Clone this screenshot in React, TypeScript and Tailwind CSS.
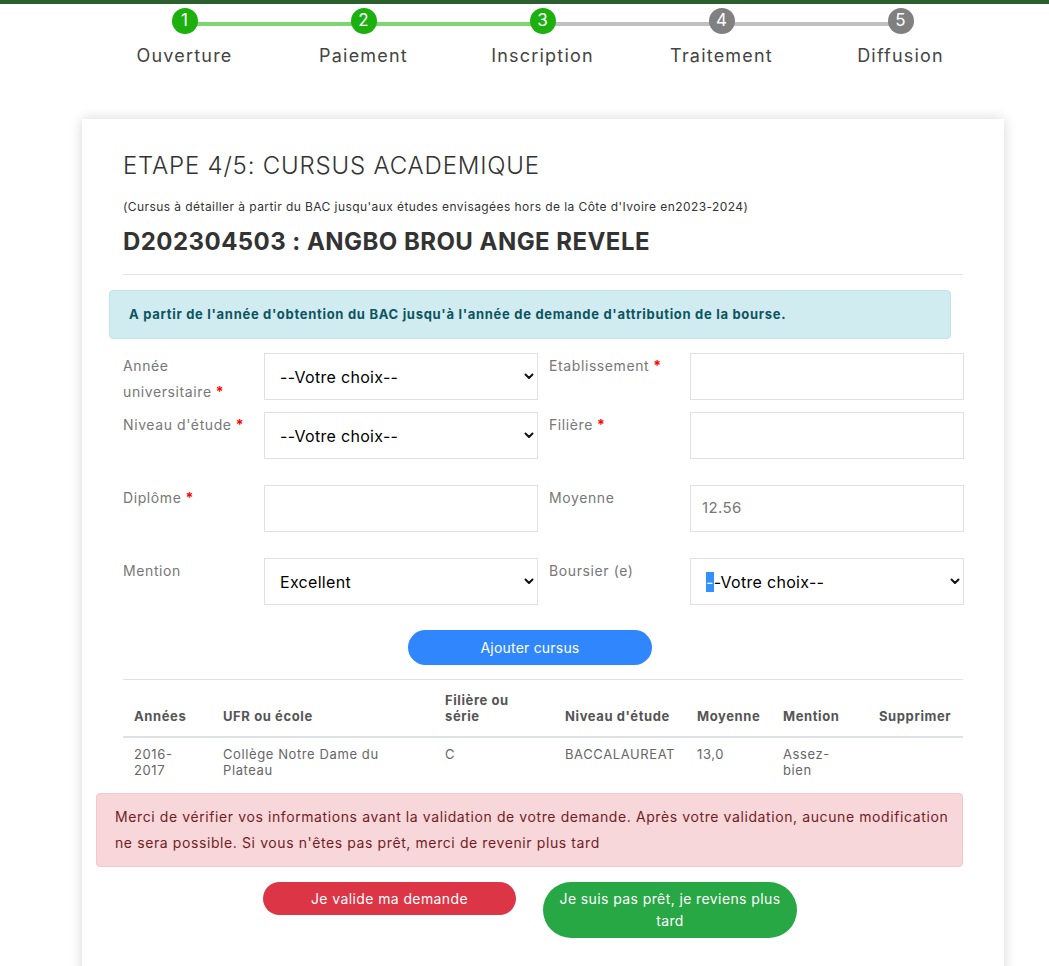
import React from "react";

const FONT = { fontFamily: "Inter, 'Open Sans', 'Liberation Sans', sans-serif" };

function Chevron() {
  return (
    <svg width="10" height="7" viewBox="0 0 10 7" className="shrink-0">
      <path d="M1.5 1.5 L5 5 L8.5 1.5" fill="none" stroke="#111" strokeWidth="2" strokeLinecap="round" strokeLinejoin="round" />
    </svg>
  );
}

function FakeSelect({ value, highlight }: { value: string; highlight?: boolean }) {
  return (
    <div className="flex h-[47px] items-center justify-between border border-[#e0e0e0] bg-white pl-[15px] pr-[3px] text-[16px] tracking-[0.3px] text-black">
      <span>
        {highlight ? (
          <>
            <span className="bg-[#3390ff] text-white">-</span>-Votre choix--
          </>
        ) : (
          value
        )}
      </span>
      <Chevron />
    </div>
  );
}

function FakeInput({ value }: { value?: string }) {
  return (
    <div className="flex h-[47px] items-center border border-[#e0e0e0] bg-white pl-[11px] text-[15px] tracking-[0.4px] text-[#777]">
      {value}
    </div>
  );
}

function Label({ children, req, right }: { children: React.ReactNode; req?: boolean; right?: boolean }) {
  return (
    <div className={`text-[14px] leading-[26px] tracking-[0.6px] text-[#777] ${right ? "ml-[11px]" : ""}`}>
      {children}
      {req && <span className="ml-1 font-bold text-[#ff0000]">*</span>}
    </div>
  );
}

const steps = [
  { n: 1, label: "Ouverture", done: true, line: true },
  { n: 2, label: "Paiement", done: true, line: true },
  { n: 3, label: "Inscription", done: true, line: false },
  { n: 4, label: "Traitement", done: false, line: false },
  { n: 5, label: "Diffusion", done: false, line: false },
];

const ROW = "grid grid-cols-[141px_274px_152px_274px]";

export default function App() {
  return (
    <div className="min-h-[966px] w-[1049px] overflow-hidden bg-white" style={FONT}>
      <div className="h-[4px] bg-[#2c5f2f]" />
      {/* Stepper */}
      <div className="ml-[95px] flex w-[895px]">
        {steps.map((s, i) => (
          <div key={s.n} className="relative flex w-[179px] flex-col items-center">
            {i < 4 && (
              <div
                className={`absolute left-1/2 top-[18px] h-[4px] w-full ${s.line ? "bg-[#7dd66f]" : "bg-[#c0c0c0]"}`}
              />
            )}
            <div
              className={`relative z-10 mt-[4px] flex h-[26px] w-[26px] items-center justify-center rounded-full text-[17px] text-white ${
                s.done ? "bg-[#1cb00f]" : "bg-[#808080]"
              }`}
            >
              {s.n}
            </div>
            <div className="mt-[10px] text-[18px] leading-[24px] tracking-[1.2px] text-[#444]">{s.label}</div>
          </div>
        ))}
      </div>

      {/* Card */}
      <div className="ml-[82px] mt-[51px] w-[922px] bg-white pb-[40px] pt-[32px] shadow-[0_0_12px_rgba(0,0,0,0.16)]">
        <div className="px-[41px]">
          <h1 className="text-[24px] font-light leading-[29px] tracking-[0.8px] text-[#333]">ETAPE 4/5: CURSUS ACADEMIQUE</h1>
          <p className="mt-[18px] text-[12px] leading-[18px] tracking-[0.43px] text-[#333]">
            (Cursus à détailler à partir du BAC jusqu'aux études envisagées hors de la Côte d'Ivoire en2023-2024)
          </p>
          <h2 className="mt-[11px] text-[24px] font-bold leading-[29px] tracking-[0.45px] text-[#333]">
            D202304503 : ANGBO BROU ANGE REVELE
          </h2>
          <div className="mt-[18px] h-px bg-[#e5e5e5]" />
        </div>

        <div className="ml-[27px] mt-[15px] w-[842px] rounded-[4px] border border-[#bee5eb] bg-[#d1ecf1] py-[13px] pl-[19px] text-[13px] font-bold leading-[21px] tracking-[0.7px] text-[#0c5460]">
          A partir de l'année d'obtention du BAC jusqu'à l'année de demande d'attribution de la bourse.
        </div>

        {/* Form */}
        <div className="mt-[14px] px-[41px]">
          <div className={ROW}>
            <Label req>
              Année
              <br />
              universitaire
            </Label>
            <FakeSelect value="--Votre choix--" />
            <Label req right>
              Etablissement
            </Label>
            <FakeInput />
          </div>
          <div className={`mt-[7px] ${ROW}`}>
            <Label req>Niveau d'étude</Label>
            <FakeSelect value="--Votre choix--" />
            <Label req right>
              Filière
            </Label>
            <FakeInput />
          </div>
          <div className={`mt-[26px] ${ROW}`}>
            <Label req>Diplôme</Label>
            <FakeInput />
            <Label right>Moyenne</Label>
            <FakeInput value="12.56" />
          </div>
          <div className={`mt-[26px] ${ROW}`}>
            <Label>Mention</Label>
            <FakeSelect value="Excellent" />
            <Label right>Boursier (e)</Label>
            <FakeSelect value="--Votre choix--" highlight />
          </div>

          <div className="ml-[285px] mt-[25px] flex">
            <button className="h-[35px] w-[244px] rounded-full bg-[#3087fd] text-[14px] tracking-[0.2px] text-white">
              Ajouter cursus
            </button>
          </div>

          <table className="mt-[14px] w-[840px] table-fixed border-collapse text-[13px] leading-[16px] tracking-[0.6px]">
            <colgroup>
              <col className="w-[89px]" />
              <col className="w-[222px]" />
              <col className="w-[120px]" />
              <col className="w-[132px]" />
              <col className="w-[86px]" />
              <col className="w-[96px]" />
              <col className="w-[95px]" />
            </colgroup>
            <thead>
              <tr className="border-t border-b-2 border-[#dee2e6] text-left align-bottom font-bold text-[#555]">
                <th className="px-[11px] py-[12px]">Années</th>
                <th className="px-[11px] py-[12px]">UFR ou école</th>
                <th className="px-[11px] py-[12px]">
                  Filière ou
                  <br />
                  série
                </th>
                <th className="px-[11px] py-[12px]">Niveau d'étude</th>
                <th className="px-[11px] py-[12px]">Moyenne</th>
                <th className="px-[11px] py-[12px]">Mention</th>
                <th className="px-[11px] py-[12px]">Supprimer</th>
              </tr>
            </thead>
            <tbody>
              <tr className="align-top text-[#666]">
                <td className="px-[11px] pb-[8px] pt-[8px]">
                  2016-
                  <br />
                  2017
                </td>
                <td className="px-[11px] pb-[8px] pt-[8px]">Collège Notre Dame du Plateau</td>
                <td className="px-[11px] pb-[8px] pt-[8px]">C</td>
                <td className="px-[11px] pb-[8px] pt-[8px]">BACCALAUREAT</td>
                <td className="px-[11px] pb-[8px] pt-[8px]">13,0</td>
                <td className="px-[11px] pb-[8px] pt-[8px]">
                  Assez-
                  <br />
                  bien
                </td>
                <td className="px-[11px] pb-[8px] pt-[8px]"></td>
              </tr>
            </tbody>
          </table>
        </div>

        <div className="ml-[14px] mt-[7px] w-[867px] rounded-[4px] border border-[#f5c6cb] bg-[#f8d7da] py-[10px] pl-[18px] pr-[12px] text-[14px] leading-[26px] tracking-[0.6px] text-[#721c24]">
          Merci de vérifier vos informations avant la validation de votre demande. Après votre validation, aucune modification ne sera possible. Si vous n'êtes pas prêt, merci de revenir plus tard
        </div>

        <div className="ml-[181px] mt-[15px] flex items-start gap-[27px]">
          <button className="h-[33px] w-[253px] rounded-full bg-[#dc3545] text-[14px] tracking-[0.4px] text-white">
            Je valide ma demande
          </button>
          <button className="w-[254px] rounded-full bg-[#28a745] px-[14px] py-[6px] text-[14px] leading-[22px] tracking-[0.4px] text-white">
            Je suis pas prêt, je reviens plus tard
          </button>
        </div>
      </div>
    </div>
  );
}
